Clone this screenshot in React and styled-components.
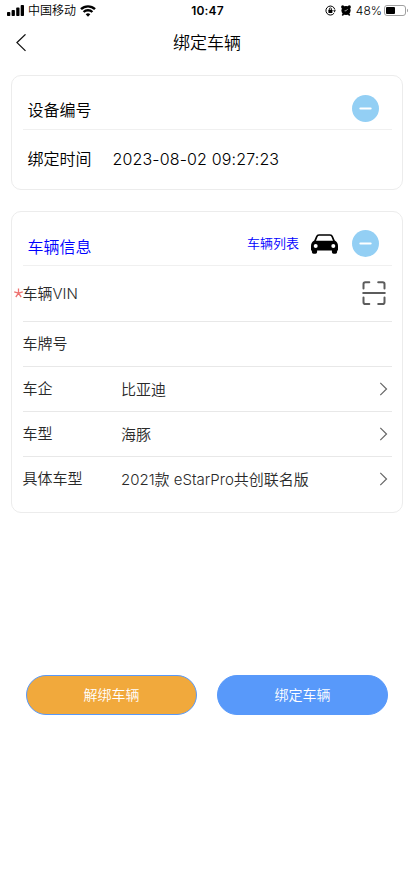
import React from "react";
import styled, { createGlobalStyle } from "styled-components";

const GlobalStyle = createGlobalStyle`
  * {
    box-sizing: border-box;
  }
  body {
    margin: 0;
    background: #fff;
    font-family: Inter, "Noto Sans CJK SC", sans-serif;
    font-weight: 350;
  }
  svg {
    display: block;
    flex-shrink: 0;
  }
`;

const Page = styled.div`
  width: 100%;
  min-height: 896px;
  background: #fff;
  color: #000;
`;

const StatusBar = styled.div`
  height: 21px;
  padding: 0 6px 0 7px;
  display: grid;
  grid-template-columns: 1fr auto 1fr;
  align-items: center;
  font-size: 12px;
  line-height: 21px;
`;

const StatusSide = styled.div`
  display: flex;
  align-items: center;
  justify-content: ${({ $end }) => ($end ? "flex-end" : "flex-start")};
  gap: ${({ $end }) => ($end ? "5px" : "4px")};
`;

const Clock = styled.div`
  font-weight: 600;
  letter-spacing: 0.2px;
`;

const Battery = styled.div`
  display: flex;
  align-items: center;
  gap: 2px;
`;

const NavBar = styled.header`
  height: 43px;
  padding: 0 15px;
  display: grid;
  grid-template-columns: 1fr auto 1fr;
  align-items: center;
`;

const BackButton = styled.button`
  width: 12px;
  padding: 0;
  border: 0;
  background: none;
`;

const Title = styled.h1`
  margin: 0;
  font-size: 17px;
  font-weight: inherit;
  line-height: 24px;
`;

const Main = styled.main`
  padding: 11px 11px 0;
`;

const Card = styled.section`
  height: ${({ $height }) => $height};
  margin-bottom: 21px;
  padding: 0 10px 0 11px;
  border: 1px solid #ececec;
  border-radius: 10px;
`;

const CardHeader = styled.div`
  height: 54px;
  padding: ${({ $tight }) => ($tight ? "10px" : "11px")} 13px 0 5px;
  display: flex;
  align-items: center;
  border-bottom: 1px solid #f0f0f0;
`;

const CardTitle = styled.h2`
  margin: 0 auto 0 -0.5px;
  padding-top: ${({ $link }) => ($link ? "6px" : "4px")};
  font-size: 16px;
  font-weight: inherit;
  line-height: 24px;
  color: ${({ $link }) => ($link ? "#0000ff" : "#000")};
`;

const ListLink = styled.a`
  margin-right: 12px;
  padding-bottom: 1px;
  font-size: 13px;
  line-height: 20px;
  color: #0000ff;
`;

const CollapseButton = styled.button`
  width: 27px;
  height: 27px;
  margin-left: 14px;
  padding: 0;
  display: flex;
  align-items: center;
  justify-content: center;
  border: 0;
  border-radius: 50%;
  background: #93cff4;
`;

const TimeRow = styled.div`
  height: 57px;
  padding-left: 4.5px;
  display: flex;
  align-items: center;
  font-size: 16px;
`;

const TimeLabel = styled.span`
  width: 85px;
  padding-bottom: 1px;
`;

const TimeValue = styled.span`
  letter-spacing: 0.15px;
`;

const Field = styled.div`
  height: ${({ $tall }) => ($tall ? "56px" : "45px")};
  padding-right: ${({ $tall }) => ($tall ? "6px" : "4px")};
  display: flex;
  align-items: center;
  border-bottom: 1px solid ${({ $last }) => ($last ? "transparent" : "#e8e8e8")};
  font-size: 15px;
  line-height: 22px;
  color: #2a2a2a;
`;

const Required = styled.span`
  width: 9px;
  margin-left: -9px;
`;

const FieldLabel = styled.span`
  width: 98.5px;
  margin-left: -0.5px;
`;

const FieldValue = styled.span`
  flex: 1;
  padding-top: 2px;
  white-space: nowrap;
`;

const Actions = styled.div`
  margin-top: 162px;
  padding: 0 15px;
  display: flex;
  gap: 20px;
`;

const ActionButton = styled.button`
  flex: 1;
  height: 40px;
  padding: 0 0 2px;
  border: 1px solid #5899fa;
  border-radius: 20px;
  background: ${({ $warn }) => ($warn ? "#f1a93c" : "#5899fa")};
  color: #fff;
  font: inherit;
  font-size: 14px;
`;

const SignalIcon = () => (
  <svg width="17" height="11" viewBox="0 0 17 11">
    <rect x="0" y="7" width="3.3" height="4" rx="0.8" />
    <rect x="4.6" y="5" width="3.3" height="6" rx="0.8" />
    <rect x="9.2" y="2.6" width="3.3" height="8.4" rx="0.8" />
    <rect x="13.7" y="0" width="3.3" height="11" rx="0.8" />
  </svg>
);

const WifiIcon = () => (
  <svg width="16" height="12" viewBox="0 0 16 12" fill="none" stroke="#000" strokeWidth="2.4">
    <path d="M1 4.2a10 10 0 0 1 14 0" />
    <path d="M3.6 7a6.3 6.3 0 0 1 8.8 0" />
    <path d="M8 11.8 5.7 9.3a3.3 3.3 0 0 1 4.6 0Z" fill="#000" stroke="none" />
  </svg>
);

const RotationLockIcon = () => (
  <svg width="11" height="11" viewBox="0 0 11 11" fill="none" stroke="#000">
    <path d="M9.2 8A4.5 4.5 0 1 1 9.8 4.5" />
    <path d="M8.1 5.2h2.8L9.5 7.2Z" fill="#000" stroke="none" />
    <rect x="3.4" y="4.8" width="4" height="3.1" rx="0.4" fill="#000" stroke="none" />
    <path d="M4.3 5V4a1.1 1.1 0 0 1 2.2 0v1" strokeWidth="0.8" />
  </svg>
);

const AlarmIcon = () => (
  <svg width="10" height="11" viewBox="0 0 10 11">
    <circle cx="5" cy="5.5" r="4.6" />
    <circle cx="1.7" cy="1.9" r="1.6" />
    <circle cx="8.3" cy="1.9" r="1.6" />
    <path d="m1.3 10.5 1.5-2M8.7 10.5l-1.5-2" stroke="#000" strokeWidth="1.6" />
    <path d="M5.1 5.8 6.7 4M5.1 5.8H3.6" stroke="#fff" strokeWidth="0.6" />
  </svg>
);

const BatteryIcon = () => (
  <svg width="24" height="11" viewBox="0 0 24 11">
    <rect x="0.5" y="0.5" width="21" height="10" rx="2.5" fill="none" stroke="#a0a0a0" />
    <rect x="2" y="2" width="9" height="7" rx="1" />
    <path d="M23 3.7a2 2 0 0 1 0 3.6Z" fill="#a0a0a0" />
  </svg>
);

const BackIcon = () => (
  <svg width="12" height="18" viewBox="0 0 12 18" fill="none" stroke="#111" strokeWidth="1.3">
    <path d="M10.5.4 2 8.6l8.5 8.3" />
  </svg>
);

const CarIcon = () => (
  <svg width="27" height="20" viewBox="0 0 27 20">
    <path
      fillRule="evenodd"
      d="M3.2 6.6 4.9 2.4Q5.7.3 8 .3h11q2.3 0 3.1 2.1l1.7 4.2Q27 8.4 27 12v4.5h-.9v1.6q0 1.6-1.6 1.6h-2q-1.6 0-1.6-1.6v-1.6H6.1v1.6q0 1.6-1.6 1.6h-2Q.9 19.7.9 18.1v-1.6H0V12q0-3.6 3.2-5.4ZM5 6.7h17l-1.5-3.8Q20 1.7 18.8 1.7H8.2Q7 1.7 6.5 2.9Z"
    />
    <circle cx="4.7" cy="12" r="2" fill="#fff" />
    <circle cx="22.3" cy="12" r="2" fill="#fff" />
  </svg>
);

const MinusIcon = () => (
  <svg width="13" height="3" viewBox="0 0 13 3">
    <rect x="0.3" y="0.4" width="12.4" height="2.2" rx="1.1" fill="#fff" />
  </svg>
);

const AsteriskIcon = () => (
  <svg width="9" height="12" viewBox="0 0 9 12" stroke="#ee7472" strokeWidth="1.3">
    <path d="M4.5 5.2V.6M4.5 5.2.2 3.8M4.5 5.2l4.3-1.4M4.5 5.2 1.8 9M4.5 5.2 7.2 9" />
  </svg>
);

const ScanIcon = () => (
  <svg
    width="24"
    height="26"
    viewBox="0 0 24 26"
    fill="none"
    stroke="#5c5c5c"
    strokeWidth="2"
    strokeLinecap="round"
  >
    <path d="M1.5 7.5V3q0-1.8 1.8-1.8h4M16.2 1.2h4.5q1.8 0 1.8 1.8v4.5M1.5 16.5v4.8q0 1.8 1.8 1.8h4M16.2 23.1h4.5q1.8 0 1.8-1.8v-4.8M1.2 12h21.6" />
  </svg>
);

const ChevronIcon = () => (
  <svg width="9" height="14" viewBox="0 0 9 14" fill="none" stroke="#666" strokeWidth="1.2">
    <path d="m1.3.9 6.2 6.1-6.2 6.1" />
  </svg>
);

const fields = [
  { label: "车牌号" },
  { label: "车企", value: "比亚迪" },
  { label: "车型", value: "海豚" },
  { label: "具体车型", value: "2021款 eStarPro共创联名版" },
];

const App = () => {
  return (
    <Page>
      <GlobalStyle />
      <StatusBar>
        <StatusSide>
          <SignalIcon />
          <span>中国移动</span>
          <WifiIcon />
        </StatusSide>
        <Clock>10:47</Clock>
        <StatusSide $end>
          <RotationLockIcon />
          <AlarmIcon />
          <Battery>
            <span>48%</span>
            <BatteryIcon />
          </Battery>
        </StatusSide>
      </StatusBar>
      <NavBar>
        <BackButton>
          <BackIcon />
        </BackButton>
        <Title>绑定车辆</Title>
      </NavBar>
      <Main>
        <Card $height="115px">
          <CardHeader>
            <CardTitle>设备编号</CardTitle>
            <CollapseButton>
              <MinusIcon />
            </CollapseButton>
          </CardHeader>
          <TimeRow>
            <TimeLabel>绑定时间</TimeLabel>
            <TimeValue>2023-08-02 09:27:23</TimeValue>
          </TimeRow>
        </Card>
        <Card $height="302px">
          <CardHeader $tight>
            <CardTitle $link>车辆信息</CardTitle>
            <ListLink>车辆列表</ListLink>
            <CarIcon />
            <CollapseButton>
              <MinusIcon />
            </CollapseButton>
          </CardHeader>
          <Field $tall>
            <Required>
              <AsteriskIcon />
            </Required>
            <FieldLabel>车辆VIN</FieldLabel>
            <FieldValue />
            <ScanIcon />
          </Field>
          {fields.map(({ label, value }, i) => (
            <Field key={label} $last={i === fields.length - 1}>
              <FieldLabel>{label}</FieldLabel>
              <FieldValue>{value}</FieldValue>
              {value && <ChevronIcon />}
            </Field>
          ))}
        </Card>
        <Actions>
          <ActionButton $warn>解绑车辆</ActionButton>
          <ActionButton>绑定车辆</ActionButton>
        </Actions>
      </Main>
    </Page>
  );
};

export default App;
